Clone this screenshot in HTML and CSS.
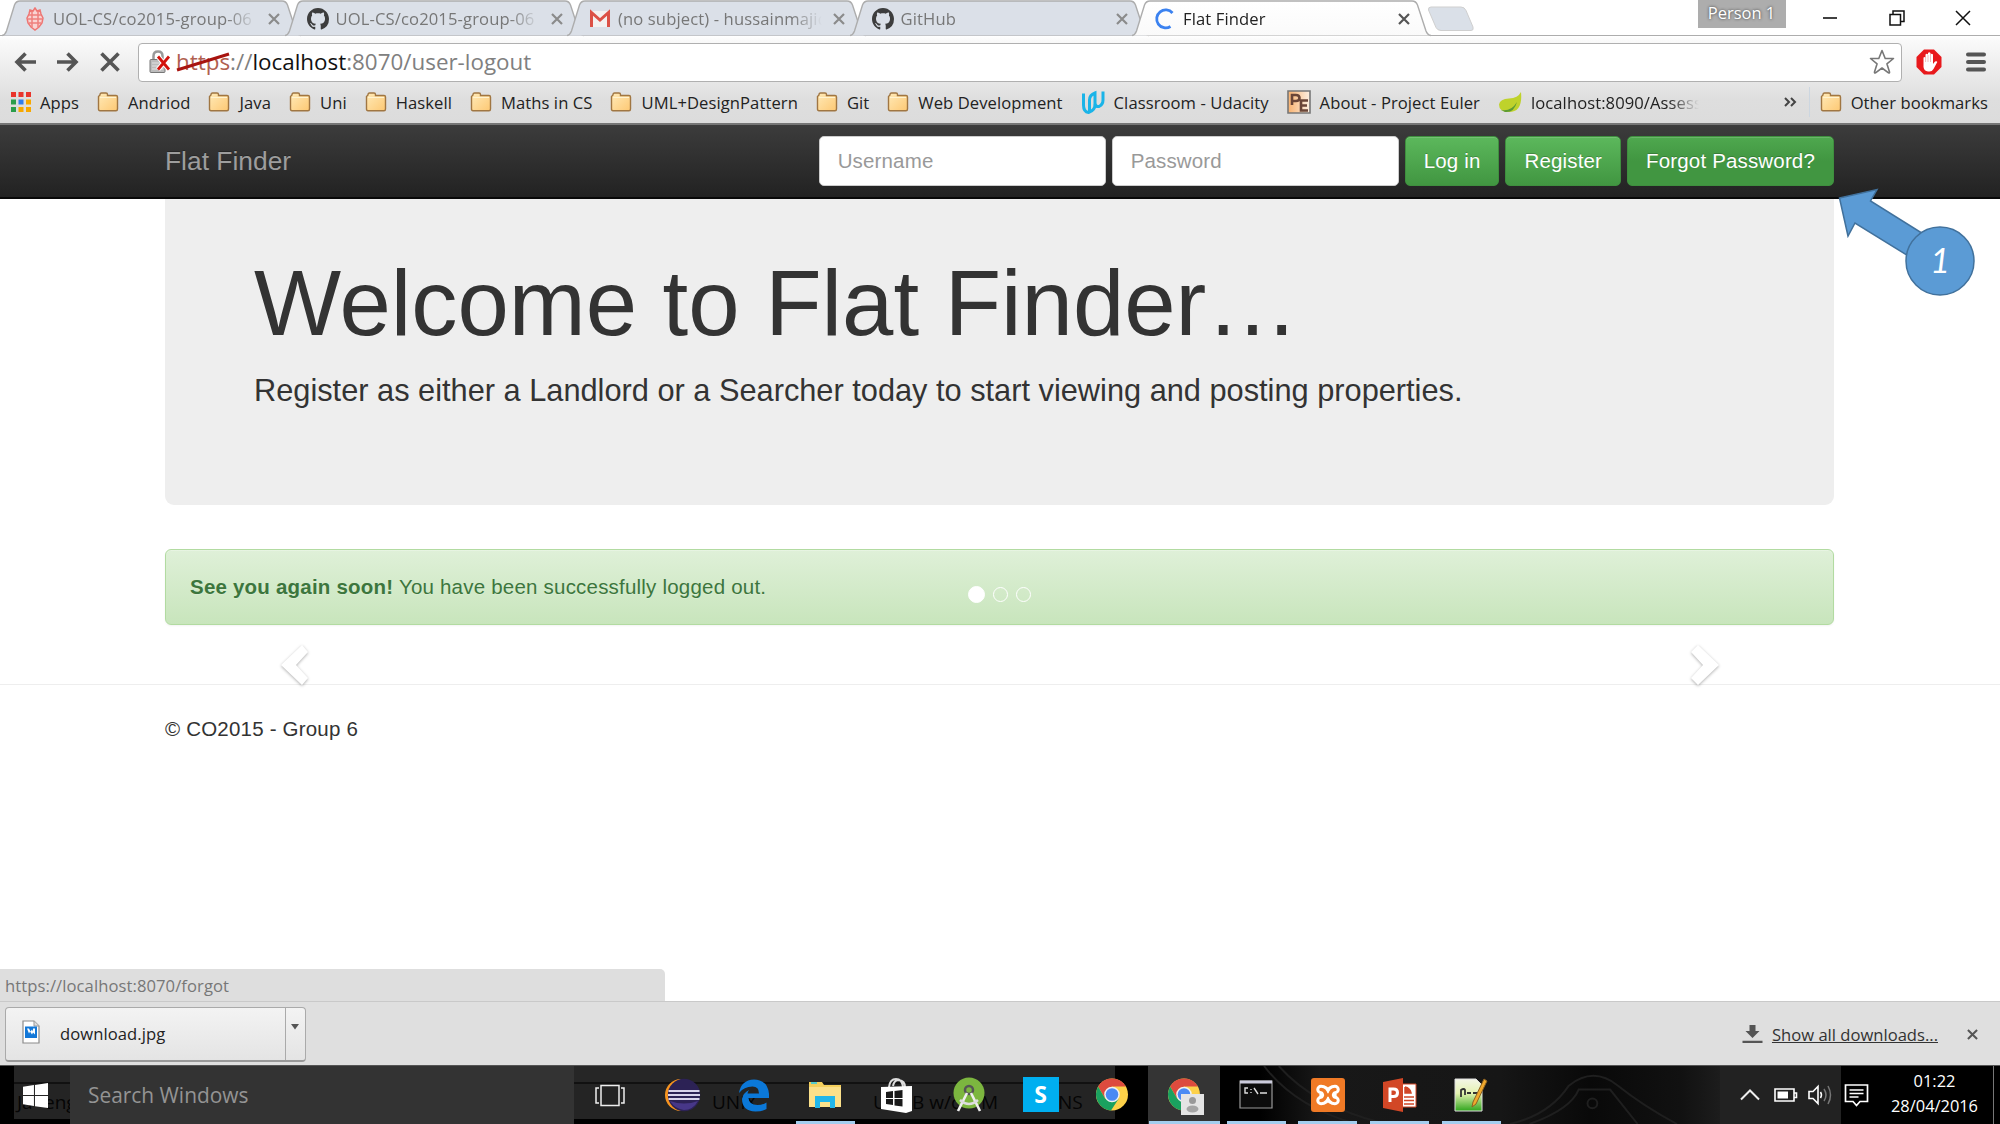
FILE: index.html
```html
<!DOCTYPE html>
<html lang="en">
<head>
<meta charset="utf-8">
<title>Flat Finder</title>
<link rel="stylesheet" href="styles.css">
</head>
<body>
<svg width="0" height="0" class="defs">
  <defs>
    <linearGradient id="folderFill" x1="0" y1="0" x2="1" y2="1"><stop offset="0" stop-color="#ffeab8"/><stop offset="1" stop-color="#fdc873"/></linearGradient>
    <linearGradient id="toolbarFill" x1="0" y1="0" x2="0" y2="1"><stop offset="0" stop-color="#fff"/><stop offset="1" stop-color="#fafafa"/></linearGradient>
    <linearGradient id="euler" x1="0" y1="0" x2="1" y2="0"><stop offset="0" stop-color="#f8b270"/><stop offset="1" stop-color="#fdf0e2"/></linearGradient>
    <linearGradient id="npp" x1="0" y1="0" x2="0" y2="1"><stop offset="0" stop-color="#f4f6e8"/><stop offset=".45" stop-color="#e4f2b0"/><stop offset="1" stop-color="#2fa51c"/></linearGradient>
    <symbol id="folder" viewBox="0 0 22 20"><path d="M1.500 17V4.500L3 3V2.500Q3 1 4.500 1H9q1.500 0 1.500 1.500V3.500H19q1.500 0 1.500 1.500V17q0 1.800-1.500 1.800H3Q1.500 18.800 1.500 17z" fill="url(#folderFill)" stroke="#a07642" stroke-width="1.400"/><path d="M3 5.500h16" stroke="#fff3d0" fill="none"/></symbol>
    <symbol id="octocat" viewBox="0 0 16 16"><path fill="#3d3d3d" d="M8 0C3.580 0 0 3.580 0 8c0 3.540 2.290 6.530 5.470 7.590.4.070.55-.17.55-.38 0-.19-.01-.82-.01-1.490-2.010.37-2.530-.49-2.690-.94-.09-.23-.48-.94-.82-1.130-.28-.15-.68-.52-.01-.53.63-.01 1.080.58 1.230.82.72 1.210 1.870.87 2.330.66.07-.52.28-.87.51-1.070-1.780-.2-3.640-.89-3.640-3.950 0-.87.31-1.590.82-2.150-.08-.2-.36-1.020.08-2.120 0 0 .67-.21 2.200.82.64-.18 1.320-.27 2-.27s1.360.09 2 .27c1.530-1.040 2.200-.82 2.200-.82.44 1.100.16 1.920.08 2.120.51.56.82 1.270.82 2.150 0 3.070-1.870 3.750-3.650 3.950.29.25.54.73.54 1.480 0 1.070-.01 1.930-.01 2.200 0 .21.15.46.55.38A8.010 8.010 0 0 0 16 8c0-4.420-3.580-8-8-8z"/></symbol>
    <symbol id="close" viewBox="0 0 12 12"><path d="M1 1l10 10M11 1L1 11" stroke="currentColor" stroke-width="2.200" fill="none"/></symbol>
    <symbol id="tabShape" viewBox="0 0 300 37"><path d="M0 35.500Q3 35 4.500 31L12.500 5Q14 1 18 1H280Q284 1 285.500 5L294 31Q295.500 35 299 35.500" stroke="#adadad" stroke-width="1.400"/></symbol>
    <symbol id="chrome" viewBox="0 0 34 34"><circle cx="17" cy="17" r="16.500" fill="#fdd149"/><path d="M17 8.750h14.300A16.500 16.500 0 0 0 2.700 8.750L9.900 21z" fill="#dd4b3e"/><path d="M2.700 8.750A16.500 16.500 0 0 0 16 33.500L24 21.200 17 25 9.900 21z" fill="#1aa15f"/><circle cx="17" cy="17" r="8" fill="#f1f1f1"/><circle cx="17" cy="17" r="6.500" fill="#4a8af4"/></symbol>
  </defs>
</svg>

<header class="browser">
  <div class="tabstrip">
    <div class="tab">
      <svg class="tab-bg"><use href="#tabShape"/></svg>
      <svg class="fav" viewBox="0 0 22 24"><path d="M5 7l1-4 3 1 2-3 2 3 3-1 1 4 2 4-1 5-3 4-4 3-4-3-3-4-1-5z" fill="#f9d3d2" stroke="#ee7673" stroke-width="1.500"/><path d="M5 8h12M4 12h14M5 16h12M8 4v16M14 4v16" stroke="#ee7f7c" stroke-width="1.500"/></svg>
      <span class="tab-title">UOL-CS/co2015-group-06</span>
      <svg class="tab-x"><use href="#close"/></svg>
    </div>
    <div class="tab">
      <svg class="tab-bg"><use href="#tabShape"/></svg>
      <svg class="fav"><use href="#octocat"/></svg>
      <span class="tab-title">UOL-CS/co2015-group-06</span>
      <svg class="tab-x"><use href="#close"/></svg>
    </div>
    <div class="tab">
      <svg class="tab-bg"><use href="#tabShape"/></svg>
      <svg class="fav" viewBox="0 0 22 24"><path d="M1 4h20v16H1z" fill="#f4f1f0"/><path d="M2.500 20V5.500L11 13l8.500-7.500V20" fill="none" stroke="#dc5146" stroke-width="3"/></svg>
      <span class="tab-title">(no subject) - hussainmajid</span>
      <svg class="tab-x"><use href="#close"/></svg>
    </div>
    <div class="tab">
      <svg class="tab-bg"><use href="#tabShape"/></svg>
      <svg class="fav"><use href="#octocat"/></svg>
      <span class="tab-title">GitHub</span>
      <svg class="tab-x"><use href="#close"/></svg>
    </div>
    <div class="tab active">
      <svg class="tab-bg"><use href="#tabShape"/></svg>
      <svg class="fav" viewBox="0 0 22 24"><path d="M18.500 6A9 9 0 1 0 16.500 19.500" fill="none" stroke="#3b82f0" stroke-width="2.800"/></svg>
      <span class="tab-title">Flat Finder</span>
      <svg class="tab-x"><use href="#close"/></svg>
    </div>
    <svg class="newtab" viewBox="0 0 48 26"><path d="M4 1H34q3.500 0 5 3.500L46 21q1 3.500-2 3.500H14q-3.500 0-5-3L1.500 4Q1 1 4 1z" fill="#dae0e8" stroke="#cfcfcf"/></svg>
    <div class="window-controls">
      <span class="person">Person 1</span>
      <svg width="16" height="16" viewBox="0 0 16 16"><path d="M1 8h14" stroke="#111" stroke-width="1.600"/></svg>
      <svg width="16" height="16" viewBox="0 0 16 16"><path d="M1 4.500h10.500V15H1zM4 4V1h11v10.500h-3" fill="none" stroke="#111" stroke-width="1.500"/></svg>
      <svg width="16" height="16" viewBox="0 0 16 16"><path d="M1 1l14 14M15 1L1 15" stroke="#111" stroke-width="1.500"/></svg>
    </div>
  </div>

  <div class="toolbar">
    <svg class="nav-icon" viewBox="0 0 24 22"><path d="M23 11H4M12.500 2.500L4 11l8.500 8.500" fill="none" stroke="#555" stroke-width="3.600"/></svg>
    <svg class="nav-icon" viewBox="0 0 24 22"><path d="M1 11h19M11.500 2.500L20 11l-8.500 8.500" fill="none" stroke="#555" stroke-width="3.600"/></svg>
    <svg class="nav-icon stop" viewBox="0 0 24 22"><path d="M3.500 2.500l17 17M20.500 2.500l-17 17" fill="none" stroke="#555" stroke-width="3.600"/></svg>
    <div class="omnibox">
      <svg class="lock" viewBox="0 0 22 24"><path d="M4.500 11V6q0-4.500 4.500-4.500T13.500 6v5" fill="none" stroke="#999" stroke-width="2.500"/><rect x="1" y="9.500" width="15" height="13" rx="1" fill="#bcbcbc" stroke="#777"/><path d="M3 13h11M3 16h11M3 19h11" stroke="#e2e2e2"/><path d="M9 6.500l11 13M20 6.500l-11 13" stroke="#fff" stroke-width="5"/><path d="M9 6.500l11 13M20 6.500l-11 13" stroke="#d2120c" stroke-width="2.800"/></svg>
      <span class="url"><span class="scheme">https<svg class="strike" viewBox="0 0 54 20"><path d="M1 18L53 2" stroke="#a8130f" stroke-width="3"/></svg></span>://<b>localhost</b>:8070/user-logout</span>
      <svg class="star" viewBox="0 0 26 26"><path d="M13 1.500l3.200 8h8.300l-6.600 5.300 2.600 8.200q.3 1.500-1 .8L13 19l-6.500 4.800q-1.300.7-1-.8l2.600-8.200L1.500 9.500h8.300z" fill="#fff" stroke="#777" stroke-width="1.600" stroke-linejoin="round"/></svg>
    </div>
    <svg class="adblock" viewBox="0 0 26 26"><path d="M8 .5h10L25.500 8v10L18 25.500H8L.5 18V8z" fill="#e8191c"/><path d="M7.500 13V8.500q1.500-1 2 0V5.500q1.200-1.500 2.500 0V4q1.300-1.500 2.500 0v1.500q1.300-1.500 2.500 0V15l2-2.500q2-.8 2.300.5L17.500 20q-1.500 2.500-4 2.500h-1.500Q8 22 7.500 18z" fill="#fff"/><path d="M9.600 8v5M12 6v7M14.500 5v8" stroke="#e9a3a3" stroke-width=".7"/></svg>
    <svg class="menu" viewBox="0 0 20 20"><path d="M2 2.500h16M2 10h16M2 17.500h16" stroke="#555" stroke-width="4" stroke-linecap="round"/></svg>
  </div>

  <nav class="bookmarks">
    <span class="bm"><svg class="apps" viewBox="0 0 20 20"><g fill="#e9352c"><path d="M0 0h5v5H0zM7.500 0h5v5h-5zM15 0h5v5h-5z"/></g><path d="M0 7.500h5v5H0zM0 15h5v5H0z" fill="#2a9d4b"/><path d="M7.500 7.500h5v5h-5z" fill="#2e7df0"/><path d="M15 7.500h5v5h-5zM7.500 15h5v5h-5zM15 15h5v5h-5z" fill="#f7a800"/></svg>Apps</span>
    <span class="bm"><svg><use href="#folder"/></svg>Andriod</span>
    <span class="bm"><svg><use href="#folder"/></svg>Java</span>
    <span class="bm"><svg><use href="#folder"/></svg>Uni</span>
    <span class="bm"><svg><use href="#folder"/></svg>Haskell</span>
    <span class="bm"><svg><use href="#folder"/></svg>Maths in CS</span>
    <span class="bm"><svg><use href="#folder"/></svg>UML+DesignPattern</span>
    <span class="bm"><svg><use href="#folder"/></svg>Git</span>
    <span class="bm"><svg><use href="#folder"/></svg>Web Development</span>
    <span class="bm"><svg class="site" viewBox="0 0 24 24"><path d="M2.500 3.500V15q0 7 5 7.500 6.500-2 6.500-8V3Q8.500 5 8.500 10v12" fill="none" stroke="#1ab4e8" stroke-width="3"/><path d="M14 14q1 3 4 2.500 4-2 4-6.500V1.500" fill="none" stroke="#1ab4e8" stroke-width="3"/></svg>Classroom - Udacity</span>
    <span class="bm"><svg class="site" viewBox="0 0 24 24"><path d="M1 1h22v22H1z" fill="url(#euler)" stroke="#777" stroke-width="1.600"/><path d="M5 15V5h4q3.500 0 3.500 3T9 11H5M21 10.500h-7v10h7M14 15.500h6" fill="none" stroke="#6a4638" stroke-width="2.600"/></svg>About - Project Euler</span>
    <span class="bm"><svg class="site" viewBox="0 0 24 24"><path d="M23 2q2 20-12 20Q1 22 1 14.500 2 9 11 8.500 20 8 23 2z" fill="#bfd22b"/><path d="M3 20q10 2 16-8-3 11-12 10z" fill="#5d9b33"/></svg><span class="clip">localhost:8090/Assess</span></span>
    <svg class="more" viewBox="0 0 13 10"><path d="M1 1l4 4-4 4M7 1l4 4-4 4" fill="none" stroke="#444" stroke-width="2"/></svg>
    <span class="bm other"><svg><use href="#folder"/></svg>Other bookmarks</span>
  </nav>
</header>

<main class="page">
  <nav class="navbar">
    <a class="brand">Flat Finder</a>
    <form class="login">
      <span class="field">Username</span>
      <span class="field">Password</span>
      <a class="btn">Log in</a>
      <a class="btn">Register</a>
      <a class="btn hover">Forgot Password?</a>
    </form>
  </nav>
  <section class="jumbotron">
    <h1>Welcome to Flat Finder…</h1>
    <p>Register as either a Landlord or a Searcher today to start viewing and posting properties.</p>
  </section>
  <div class="alert"><strong>See you again soon!</strong> You have been successfully logged out.
    <span class="dots"><i class="on"></i><i></i><i></i></span>
  </div>
  <div class="rule">
    <svg class="chev left" viewBox="0 0 32 46"><path d="M23 2L2 22l21 20 6-7-12-13 12-13z"/></svg>
    <svg class="chev right" viewBox="0 0 32 46"><path d="M9 2l21 20L9 42l-7-7 12-13L2 9z"/></svg>
  </div>
  <footer>© CO2015 - Group 6</footer>

  <svg class="callout" viewBox="1830 180 150 120">
    <g fill="#5b9bd5" stroke="#41719c" stroke-width="1.500"><path d="M1839.500 197L1877 188.500 1870.500 200 1925 234 1910 256 1855 222 1848 235z"/><circle cx="1940" cy="260" r="34"/></g>
    <text x="1940" y="272" text-anchor="middle">1</text>
  </svg>
  <div class="status">https://localhost:8070/forgot</div>
</main>

<aside class="shelf">
  <div class="download">
    <svg class="file" viewBox="0 0 18 24"><path d="M1 1h11l5 5v17H1z" fill="#fff" stroke="#8c8c8c" stroke-width="1.200"/><path d="M12 1v5h5" fill="#ddd" stroke="#999"/><path d="M3 6.500h12V18H3z" fill="#1378d8"/><path d="M5 8.500h2l1.500 3 1.500-2 1 2V8.500h2v6l-2-2-1 2-2-3-1 2z" fill="#fff"/></svg>
    <span class="name">download.jpg</span>
    <span class="drop"><svg viewBox="0 0 8 6"><path d="M0 0h8L4 5.500z" fill="#555"/></svg></span>
  </div>
  <svg class="dl" viewBox="0 0 20 20"><path d="M7 1h6v6h4l-7 7-7-7h4zM0 16.800h20V19H0z" fill="#555"/></svg>
  <a class="all">Show all downloads...</a>
  <svg class="shelf-x"><use href="#close"/></svg>
</aside>

<div class="taskbar">
  <div class="ghost"><span class="g1">Ja</span><span class="g2">eng</span><span class="g3">UNIX</span><span class="g4">U</span><span class="g5">B w/o</span><span class="g6">M</span><span class="g7">NS</span></div>
  <svg class="swirl" viewBox="0 0 600 59"><g fill="none" stroke="#1f1f1f" stroke-width="2"><path d="M60 0Q90 40 150 58M75 0Q110 40 180 58M310 59Q350 50 370 20 395 0 420 20T480 59M330 59Q372 44 380 24H412L440 59"/><circle cx="394" cy="38" r="5"/></g></svg>
  <div class="start"><svg viewBox="0 0 24 24"><path d="M0 3.500l10.500-1.500v9.500H0zM11.500 1.800L24 0v11.500H11.500zM0 12.500h10.500V22L0 20.500zM11.500 12.500H24V24l-12.500-1.800z" fill="#fff"/></svg></div>
  <div class="search">Search Windows</div>
  <div class="apps-row">
    <span class="slot"><svg viewBox="0 0 36 36"><path d="M9 8.500h18v20H9zM7 11H4v15h3M29 11h3v15h-3" fill="none" stroke="#eee" stroke-width="1.500"/></svg></span>
    <span class="slot"><svg viewBox="0 0 36 36"><circle cx="17" cy="18" r="16" fill="#f7941e"/><circle cx="20" cy="18" r="16.200" fill="#2c2255"/><path d="M6 24q14 5 28 0-5 9-14 9-9-1-14-9z" fill="#473788"/><path d="M4.500 14h31M4 18h32M4.500 22h31" stroke="#d9d4ec" stroke-width="2"/></svg></span>
    <span class="slot"><svg viewBox="0 0 36 36"><path d="M4 16Q6 3 19 2.500 33 3 34 17v4H13.500q.5 7 9 7 5 0 9-2.500V32q-4 2.500-11 2.500Q7 34 7 22q1-6 7-9-1.500 2-1.500 3.500H24Q24 9.500 17.500 9.500 9 9.500 4 16z" fill="#0b78d8"/></svg></span>
    <span class="slot open"><svg viewBox="0 0 36 36"><path d="M2 5h13l2 3h17v22H2z" fill="#f4cf5c"/><path d="M2 10h32v20H2z" fill="#fbe08a"/><path d="M4 6h6" stroke="#5cc" stroke-width="2"/><path d="M8 19h20v12h-5v-6h-10v6H8z" fill="#20b6ea"/></svg></span>
    <span class="slot"><svg viewBox="0 0 36 36"><path d="M10 10Q11 2 17 2t7 8M14 9q1-6 6-6 6 1 6 7" fill="none" stroke="#ddd" stroke-width="2"/><path d="M2 10l31-1v25l-6 2-25-4z" fill="#fff"/><path d="M7 15l7-1v7H7zM15.500 14l8-1v8h-8zM7 22h7v6l-7-1zM15.500 22h8v7.500l-8-1z" fill="#1a1a1a"/></svg></span>
    <span class="slot"><svg viewBox="0 0 36 36"><circle cx="18" cy="16" r="15.500" fill="#7cb63f"/><circle cx="18" cy="13" r="4" fill="none" stroke="#555" stroke-width="2.500"/><path d="M16 16L7 34M20 16l9 18" stroke="#eee" stroke-width="2.600"/><path d="M9 23q9 8 18 0" fill="none" stroke="#ddd" stroke-width="2.500"/></svg></span>
    <span class="slot"><span class="skype">S</span></span>
    <span class="slot"><svg viewBox="0 0 36 36"><use href="#chrome" x="1.500" y="1" width="33" height="33"/></svg></span>
    <span class="slot open current"><svg viewBox="0 0 36 36"><use href="#chrome" x="1.500" y="1" width="33" height="33"/><path d="M15 17h23v21H15z" fill="#e4e4e4"/><circle cx="26.500" cy="23.500" r="3.500" fill="#999"/><ellipse cx="26.500" cy="32" rx="6" ry="3.500" fill="#a5a5a5"/></svg></span>
    <span class="slot open"><svg viewBox="0 0 36 36"><path d="M2 4h32v27H2z" fill="#0c0c0c" stroke="#999" stroke-width="1.200"/><path d="M2 5h32" stroke="#ccd" stroke-width="3"/><path d="M10 11H7v5h3M13 12v1M13 15v1M16 11l4 6M22 16h7" fill="none" stroke="#ddd" stroke-width="1.400"/></svg></span>
    <span class="slot open"><svg viewBox="0 0 36 36"><rect x="1" y="1" width="34" height="34" rx="3" fill="#f07a26"/><path d="M11 12.500q4 0 7 5.500 3-5.500 7-5.500M11 23.500q4 0 7-5.500 3 5.500 7 5.500M14 18h8" fill="none" stroke="#fff" stroke-width="9.500" stroke-linecap="round" stroke-linejoin="round"/><path d="M11 12.500q4 0 5 5.500h4q1-5.500 5-5.500M11 23.500q4 0 5-5.500M20 18q1 5.500 5 5.500" fill="none" stroke="#f07a26" stroke-width="3.500" stroke-linecap="round"/></svg></span>
    <span class="slot open"><svg viewBox="0 0 36 36"><path d="M17 7h17v23H17z" fill="#fff" stroke="#d04727"/><path d="M23 10v6h6q-1-5-6-6M22 20h10M22 23.500h10M22 27h10" fill="#d04727" stroke="#d04727" stroke-width="1.500"/><path d="M1 5l20-4v34L1 31z" fill="#d24726"/><path d="M8 25V12h3.500q4 0 4 3.800t-4 3.800H8" fill="none" stroke="#fff" stroke-width="3"/></svg></span>
    <span class="slot open"><svg viewBox="0 0 36 36"><path d="M2 2h21l6 6v26H2z" fill="url(#npp)" stroke="#ddd"/><path d="M8 20v-7q3-2 4 0v5M14 16h4M20 16h4" stroke="#333" fill="none" stroke-width="1.800"/><path d="M31 2l3 2-11 23-4 3 1-5z" fill="#f0a92d" stroke="#8d6221"/></svg></span>
  </div>
  <div class="tray">
    <svg class="up" viewBox="0 0 20 12"><path d="M1 10.500L10 1.500l9 9" fill="none" stroke="#eee" stroke-width="2"/></svg>
    <svg class="battery" viewBox="0 0 24 16"><path d="M1 2h19v12H1zM20 6h2.500v4.500H20" fill="none" stroke="#fff" stroke-width="1.600"/><path d="M3.500 4.500H14v7H3.500z" fill="#fff"/></svg>
    <svg class="volume" viewBox="0 0 26 22"><path d="M1 7.500h4l5-5v17l-5-5H1z" fill="none" stroke="#fff" stroke-width="1.600"/><path d="M12.500 8q2 3 0 6" fill="none" stroke="#fff" stroke-width="1.500"/><path d="M16 5q4 6 0 12M20 2q5 9 0 18" fill="none" stroke="#777" stroke-width="1.500"/></svg>
    <svg class="message" viewBox="0 0 25 25"><path d="M1.500 2h22v16.500H16l-3.500 4-3.500-4H1.500zM5.500 7h14M5.500 10.500h14M5.500 14h9" fill="none" stroke="#fff" stroke-width="1.700"/></svg>
    <div class="clock"><span>01:22</span><span>28/04/2016</span></div>
  </div>
</div>
</body>
</html>
```
FILE: styles.css
```css
* { box-sizing: border-box; }
body {
  margin: 0;
  width: 2000px;
  height: 1124px;
  overflow: hidden;
  display: flex;
  flex-direction: column;
  background: #fff;
  font-family: "Open Sans", "Noto Sans", sans-serif;
  color: #333;
}
svg { display: block; flex: none; }
.defs { position: absolute; }

/* Browser chrome */
.browser {
  height: 125px;
  border-bottom: 2px solid #767676;
  background: linear-gradient(#fff 36px, #fafafa 40px, #dedede 100px, #dcdcdc);
}
.tabstrip {
  height: 36px;
  padding-left: 2px;
  display: flex;
  background: #fff;
  border-bottom: 1px solid #adadad;
}
.tab {
  position: relative;
  width: 300px;
  height: 37px;
  margin-right: -17.5px;
  padding-left: 22px;
  display: flex;
  align-items: center;
  flex: none;
}
.tab-bg {
  position: absolute;
  left: 0;
  top: 0;
  width: 300px;
  height: 37px;
  fill: #dbe0e8;
}
.active .tab-bg { fill: url(#toolbarFill); }
.tab > :not(.tab-bg) { position: relative; }
.fav { width: 22px; height: 24px; }
.tab-title {
  width: 204px;
  margin-left: 7px;
  overflow: hidden;
  white-space: nowrap;
  font-size: 16.6px;
  letter-spacing: 0.12px;
  color: #777;
  -webkit-mask-image: linear-gradient(90deg, #000 85%, transparent);
  mask-image: linear-gradient(90deg, #000 85%, transparent);
}
.active .tab-title { color: #222; }
.tab-x { width: 12px; height: 12px; margin-left: 11px; color: #8b8b8b; }
.active .tab-x { color: #555; }
.newtab { width: 48px; height: 26px; margin: 6px 0 0 12px; }
.window-controls {
  margin: 0 29px 0 auto;
  display: flex;
  align-items: center;
  gap: 50.5px;
}
.person {
  align-self: flex-start;
  width: 88px;
  height: 28px;
  margin-right: -14px;
  line-height: 26px;
  text-align: center;
  font-size: 16.5px;
  color: #fff;
  background: #adadad;
  text-shadow: 0 0 3px #333;
}
.toolbar {
  height: 46px;
  padding: 6px 14px 0 13px;
  display: flex;
  align-items: center;
}
.nav-icon { width: 24px; height: 22px; margin-right: 18.5px; }
.nav-icon.stop { margin-right: 16px; }
.omnibox {
  flex: 1;
  height: 39px;
  padding: 0 6px 0 10px;
  display: flex;
  align-items: center;
  background: #fff;
  border: 1.5px solid #b0b0b0;
  border-radius: 4px;
}
.lock { width: 22px; height: 24px; }
.url {
  margin-left: 5px;
  font-size: 22.4px;
  line-height: 34px;
  color: #808080;
  white-space: nowrap;
}
.url b { font-weight: 400; color: #111; }
.scheme { position: relative; color: #b06050; }
.strike { position: absolute; left: 0; top: 6px; width: 54px; height: 20px; }
.star { width: 26px; height: 26px; margin-left: auto; }
.adblock { width: 26px; height: 26px; margin-left: 14px; }
.menu { width: 20px; height: 20px; margin: 0 0 0 24px; }
.bookmarks {
  height: 40px;
  padding: 0 12px 0 11px;
  display: flex;
  align-items: center;
  gap: 18px;
  font-size: 16.6px;
  letter-spacing: 0.075px;
  color: #222;
}
.bm { display: flex; align-items: center; gap: 9px; white-space: nowrap; }
.bm svg { width: 22px; height: 20px; }
.bm svg.apps { width: 20px; height: 20px; }
.bm svg.site { width: 24px; height: 24px; }
.clip {
  width: 168px;
  overflow: hidden;
  -webkit-mask-image: linear-gradient(90deg, #000 82%, transparent);
  mask-image: linear-gradient(90deg, #000 82%, transparent);
}
.more { width: 13px; height: 10px; margin-left: auto; }
.other { margin-left: -6px; padding-left: 10px; border-left: 1px solid #ccd6e0; height: 30px; }

/* Web page */
.page {
  position: relative;
  height: 876px;
  font-family: "Liberation Sans", Arial, sans-serif;
  font-size: 20.5px;
}
.navbar {
  height: 74px;
  padding: 0 166px 0 165px;
  display: flex;
  align-items: center;
  justify-content: space-between;
  background: linear-gradient(#3c3c3c, #222);
  border-bottom: 2px solid #080808;
}
.brand { font-size: 26.4px; color: #9d9d9d; text-shadow: 0 -1px 0 rgba(0, 0, 0, .25); }
.login { display: flex; gap: 6px; letter-spacing: 0.16px; }
.field, .btn { height: 50px; border-radius: 5px; line-height: 48px; white-space: nowrap; }
.field { width: 287px; padding-left: 18px; color: #999; background: #fff; border: 1px solid #ccc; }
.btn {
  padding: 0 18px;
  color: #fff;
  background: linear-gradient(#5cb85c, #419641);
  border: 1px solid #3e8f3e;
  text-shadow: 0 -1px 0 rgba(0, 0, 0, .2);
  box-shadow: inset 0 1px 0 rgba(255, 255, 255, .15);
}
.btn.hover { background: linear-gradient(#4fa84f, #419641 50%); }
.jumbotron {
  width: 1669px;
  height: 306px;
  margin: 0 0 44px 165px;
  padding: 54px 88px 0 89px;
  background: #eee;
  border-radius: 0 0 9px 9px;
}
.jumbotron h1 { margin: 0; font-size: 92.3px; line-height: 101px; font-weight: 400; }
.jumbotron p { margin: 15px 0 0; font-size: 30.75px; line-height: 43px; }
.alert {
  position: relative;
  width: 1669px;
  height: 76px;
  margin-left: 165px;
  padding-left: 24px;
  line-height: 74px;
  letter-spacing: 0.21px;
  color: #3c763d;
  background: linear-gradient(#dff0d8, #c8e5bc);
  border: 1.5px solid #b2dba1;
  border-radius: 6px;
  text-shadow: 0 1px 0 rgba(255, 255, 255, .2);
  box-shadow: inset 0 1px 0 rgba(255, 255, 255, .25), 0 1px 2px rgba(0, 0, 0, .05);
}
.dots { position: absolute; left: 802px; top: 36px; display: flex; align-items: center; gap: 8px; }
.dots i { width: 15px; height: 15px; border: 1.5px solid #fff; border-radius: 50%; }
.dots .on { width: 17px; height: 17px; background: #fff; }
.rule { position: relative; height: 60px; border-bottom: 1.5px solid #eee; }
.chev {
  position: absolute;
  top: 18px;
  width: 32px;
  height: 46px;
  overflow: visible;
  fill: #fff;
  filter: drop-shadow(0 1px 1.5px rgba(0, 0, 0, .32));
}
.chev.left { left: 279px; }
.chev.right { left: 1689px; }
footer { margin: 32px 0 0 165px; letter-spacing: 0.2px; }
.callout { position: absolute; left: 1830px; top: 56px; width: 150px; height: 120px; }
.callout text { fill: #fff; font: italic 34px Lato, sans-serif; }
.status {
  position: absolute;
  left: 0;
  bottom: 0;
  width: 665px;
  height: 32px;
  padding-left: 5px;
  line-height: 34px;
  font-family: "Open Sans", sans-serif;
  font-size: 16.6px;
  letter-spacing: 0.08px;
  color: #777;
  background: #dedede;
  border-top-right-radius: 5px;
}

/* Download shelf */
.shelf {
  height: 64px;
  padding: 5px 22px 4px 5px;
  display: flex;
  align-items: center;
  background: #dfdfdf;
  border-top: 1px solid #c9c9c9;
  font-size: 16.6px;
}
.download {
  width: 301px;
  height: 55px;
  margin-right: auto;
  padding-left: 16px;
  display: flex;
  align-items: center;
  color: #222;
  background: linear-gradient(#f3f3f3, #e4e4e4);
  border: 1px solid #aaa;
  border-bottom: 2px solid #999;
  border-radius: 4px;
}
.file { width: 18px; height: 24px; margin-bottom: 4px; }
.name { margin-left: 20px; letter-spacing: 0.08px; }
.drop {
  width: 20px;
  height: 100%;
  margin-left: auto;
  padding: 16px 0 0 5px;
  border-left: 1px solid #aaa;
}
.drop svg { width: 8px; height: 6px; }
.dl { width: 21px; height: 20px; margin-right: 9px; }
.all { color: #333; text-decoration: underline; margin-right: 29px; }
.shelf-x { width: 11px; height: 11px; color: #555; }

/* Taskbar */
.taskbar {
  position: relative;
  height: 59px;
  display: flex;
  background: #000;
  border-top: 1px solid #555;
}
.ghost {
  position: absolute;
  left: 14px;
  top: 0;
  width: 1101px;
  height: 53px;
  background: linear-gradient(#262626 16px, #111 16px, #111 18px, #242424 18px);
  font-size: 19px;
  color: #050505;
}
.ghost span { position: absolute; top: 23px; }
.ghost .g1 { left: 3px; }
.ghost .g2 { left: 30px; }
.ghost .g3 { left: 698px; }
.ghost .g4 { left: 859px; }
.ghost .g5 { left: 898px; }
.ghost .g6 { left: 967px; }
.ghost .g7 { left: 1044px; }
.swirl {
  position: absolute;
  left: 1200px;
  top: 0;
  width: 600px;
  height: 58px;
  background: linear-gradient(90deg, #000 10%, #181818 20%, #161616 50%, #090909 65%, #111 80%, #222 90%);
}
.start, .search, .apps-row, .tray { position: relative; }
.start { width: 70px; padding: 17px 0 0 23px; }
.start svg { width: 25px; height: 25px; }
.search {
  width: 504px;
  padding-left: 18px;
  line-height: 59px;
  font-size: 20.9px;
  color: #949494;
  background: #333;
}
.apps-row { display: flex; }
.slot {
  width: 71.8px;
  display: flex;
  align-items: center;
  justify-content: center;
  padding-bottom: 1px;
}
.slot svg { width: 36px; height: 36px; overflow: visible; }
.open { background: linear-gradient(#a3cdee, #a3cdee) 50% 100% / 59px 3px no-repeat; }
.current { background: linear-gradient(#a3cdee, #a3cdee) 50% 100% / 71px 3px no-repeat, #343434; }
.skype {
  width: 36px;
  height: 35px;
  line-height: 34px;
  text-align: center;
  font-size: 23px;
  font-weight: 700;
  color: #fff;
  background: #00aff0;
}
.tray {
  margin-left: auto;
  padding: 0 6px 0 20px;
  display: flex;
  align-items: center;
  background: linear-gradient(90deg, #222 121px, #000 121px);
}
.up { width: 20px; height: 12px; margin-right: 14px; }
.battery { width: 24px; height: 16px; margin-right: 10px; }
.volume { width: 26px; height: 22px; margin-right: 10px; }
.message { width: 25px; height: 25px; margin-right: 5px; }
.clock {
  width: 120px;
  height: 58px;
  padding: 2px 0 0 2px;
  display: flex;
  flex-direction: column;
  align-items: center;
  line-height: 25px;
  font-size: 16.4px;
  color: #fff;
  border-right: 1px solid #777;
}
```
